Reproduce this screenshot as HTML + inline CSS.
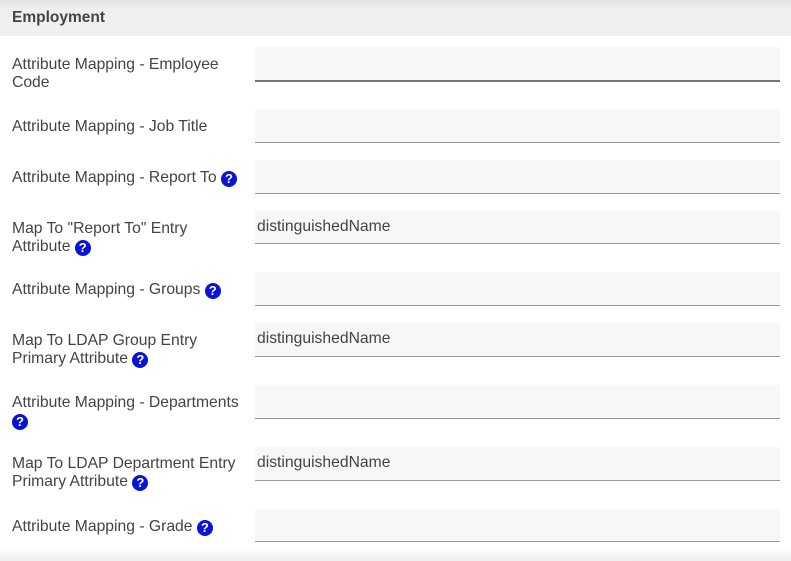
<!DOCTYPE html>
<html><head><style>
body{margin:0;width:791px;height:561px;background:#fff;font-family:"Liberation Sans",Arial,sans-serif;position:relative;overflow:hidden;color:#444}
.hdr{position:absolute;left:0;top:0;width:791px;height:36px;background:linear-gradient(#e2e2e2 0,#efefef 8px,#f0f0f0 100%);}
.hdr span{position:absolute;left:12px;top:9px;font-weight:bold;font-size:15.5px;color:#444}
.lbl{position:absolute;left:12px;font-size:15.7px;line-height:18px;width:232px}
.inp{position:absolute;left:255px;width:525px;background:#f7f7f7;border-bottom:1px solid #999;box-sizing:border-box;font-size:15.7px;padding-left:2px}
.q{display:inline-block;width:16px;height:16px;border-radius:50%;background:#0a14d8;color:#fff;font-weight:bold;font-size:13px;line-height:16px;text-align:center;vertical-align:-1px}
.foot{position:absolute;left:0;top:549px;width:791px;height:12px;background:linear-gradient(#fff,#eee)}
</style></head><body>
<div class="hdr"><span>Employment</span></div>
<div class="lbl" style="top:56px">Attribute Mapping - Employee Code</div>
<div class="inp" style="top:47px;height:35px;border-bottom:2px solid #777"></div>
<div class="lbl" style="top:118px">Attribute Mapping - Job Title</div>
<div class="inp" style="top:109px;height:34px"></div>
<div class="lbl" style="top:169px">Attribute Mapping - Report To <span class="q">?</span></div>
<div class="inp" style="top:160px;height:34px"></div>
<div class="lbl" style="top:220px">Map To "Report To" Entry Attribute <span class="q">?</span></div>
<div class="inp" style="top:211px;height:33px;line-height:32px">distinguishedName</div>
<div class="lbl" style="top:281px">Attribute Mapping - Groups <span class="q">?</span></div>
<div class="inp" style="top:272px;height:34px"></div>
<div class="lbl" style="top:332px">Map To LDAP Group Entry Primary Attribute <span class="q">?</span></div>
<div class="inp" style="top:323px;height:34px;line-height:32px">distinguishedName</div>
<div class="lbl" style="top:394px">Attribute Mapping - Departments <span class="q">?</span></div>
<div class="inp" style="top:385px;height:34px"></div>
<div class="lbl" style="top:455px">Map To LDAP Department Entry Primary Attribute <span class="q">?</span></div>
<div class="inp" style="top:447px;height:34px;line-height:32px">distinguishedName</div>
<div class="lbl" style="top:518px">Attribute Mapping - Grade <span class="q">?</span></div>
<div class="inp" style="top:509px;height:33px"></div>
<div class="foot"></div>
</body></html>
